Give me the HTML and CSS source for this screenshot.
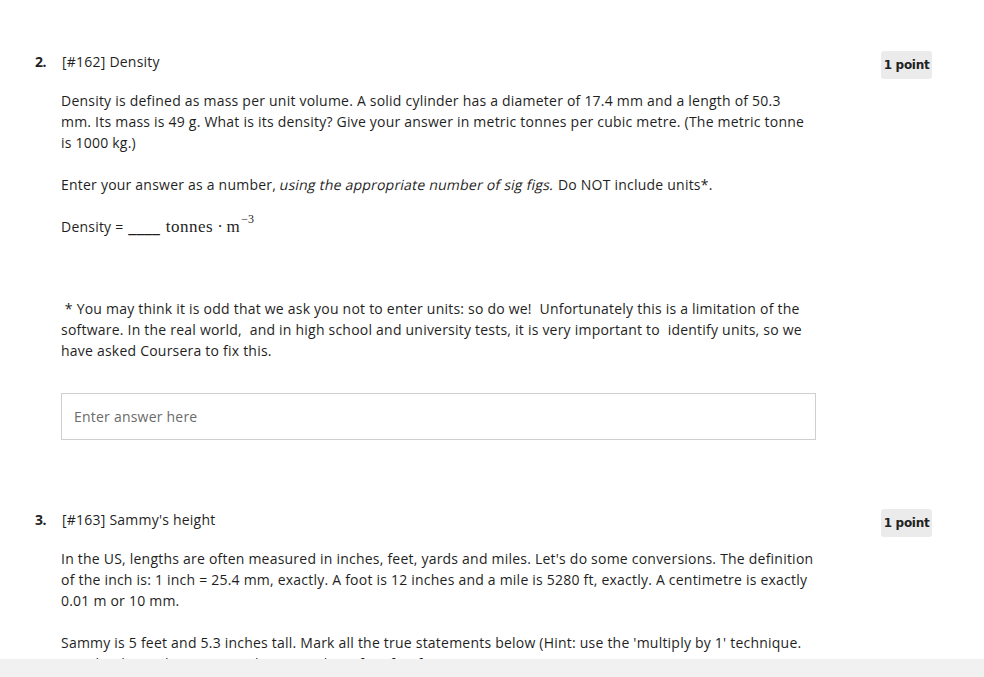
FILE: index.html
```html
<!DOCTYPE html>
<html lang="en">
<head>
<meta charset="utf-8">
<title>Quiz</title>
<link rel="stylesheet" href="styles.css">
</head>
<body>
<main class="page">
  <section class="question q2">
    <header class="q-head">
      <span class="q-num">2.</span>
      <h2 class="q-title">[#162] Density</h2>
      <span class="badge">1 point</span>
    </header>
    <div class="q-body">
      <p class="p">Density is defined as mass per unit volume. A solid cylinder has a diameter of 17.4 mm and a length of 50.3 mm. Its mass is 49 g. What is its density? Give your answer in metric tonnes per cubic metre. (The metric tonne is 1000 kg.)</p>
      <p class="p">Enter your answer as a number, <em class="slant">using the appropriate number of sig figs.</em> Do NOT include units*.</p>
      <p class="p formula">Density = <span class="blank">____</span><span class="math">tonnes<span class="dot">·</span>m<sup>−3</sup></span></p>
      <p class="p note">&nbsp;* You may think it is odd that we ask you not to enter units: so do we!&nbsp; Unfortunately this is a limitation of the software. In the real world,&nbsp; and in high school and university tests, it is very important to&nbsp; identify units, so we have asked Coursera to fix this.</p>
      <div class="answer"><input class="answer-input" type="text" placeholder="Enter answer here"></div>
    </div>
  </section>
  <section class="question q3">
    <header class="q-head">
      <span class="q-num">3.</span>
      <h2 class="q-title">[#163] Sammy's height</h2>
      <span class="badge">1 point</span>
    </header>
    <div class="q-body">
      <p class="p">In the US, lengths are often measured in inches, feet, yards and miles. Let's do some conversions. The definition of the inch is: 1 inch = 25.4 mm, exactly. A foot is 12 inches and a mile is 5280 ft, exactly. A centimetre is exactly 0.01 m or 10 mm.</p>
      <p class="p">Sammy is 5 feet and 5.3 inches tall. Mark all the true statements below (Hint: use the 'multiply by 1' technique. Use the decimal point to work out number of sig figs first.)</p>
    </div>
  </section>
</main>
<div class="bottom-bar"></div>
</body>
</html>
```

FILE: styles.css
```css
html, body {
  margin: 0;
  padding: 0;
  background: #ffffff;
}

body {
  font-family: "Open Sans", "Noto Sans", sans-serif;
  font-size: 14px;
  line-height: 21px;
  color: #1f1f1f;
  letter-spacing: 0.22px;
}

.page {
  padding: 50px 52px 0 35px;
}

.question {
  display: block;
}

.q3 {
  margin-top: 68px;
}

.q-head {
  display: flex;
  align-items: flex-start;
  height: 28px;
}

.q-num {
  width: 27px;
  font-weight: 700;
  font-size: 14px;
  line-height: 21px;
  padding-top: 1px;
  letter-spacing: -0.5px;
}

.q-title {
  flex: 1;
  margin: 0;
  font-size: 14px;
  font-weight: 400;
  line-height: 21px;
  padding-top: 1px;
}

.badge {
  display: flex;
  align-items: center;
  justify-content: center;
  width: 51px;
  height: 28px;
  margin-top: 1px;
  border-radius: 3px;
  background: #ebebeb;
  font-family: "DejaVu Sans", "Open Sans", sans-serif;
  font-weight: 700;
  font-size: 12px;
  color: #222;
  letter-spacing: -0.3px;
}

.q-body {
  margin-top: 12px;
  padding-left: 26px;
}

.p {
  margin: 0 0 21px 0;
  width: 753px;
}

.slant {
  font-style: normal;
  display: inline-block;
  transform: skewX(-12deg);
}

.formula {
  margin-bottom: 61px;
}

.blank {
  font-size: 18px;
  line-height: 0;
  letter-spacing: 0;
  margin-left: 1px;
}

.math {
  font-family: "Liberation Serif", "DejaVu Serif", serif;
  font-size: 17px;
  line-height: 21px;
  letter-spacing: 0.5px;
  margin-left: 6px;
}

.dot {
  margin: 0 3px 0 4px;
}

.math sup {
  font-size: 12px;
  line-height: 0;
  position: relative;
  top: -2px;
  letter-spacing: 0;
  margin-left: 1px;
}

.note {
  margin-bottom: 32px;
}

.answer {
  width: 755px;
}

.answer-input {
  box-sizing: border-box;
  width: 100%;
  height: 47px;
  border: 1px solid #cfcfcf;
  padding: 0 12px;
  font-family: "Open Sans", "Noto Sans", sans-serif;
  font-size: 14px;
  letter-spacing: 0.22px;
  color: #333;
  background: #fff;
  outline: none;
}

.answer-input::placeholder {
  color: #6b6b6b;
}

.bottom-bar {
  position: fixed;
  left: 0;
  right: 0;
  bottom: 0;
  height: 18px;
  background: #f1f1f1;
}
```
